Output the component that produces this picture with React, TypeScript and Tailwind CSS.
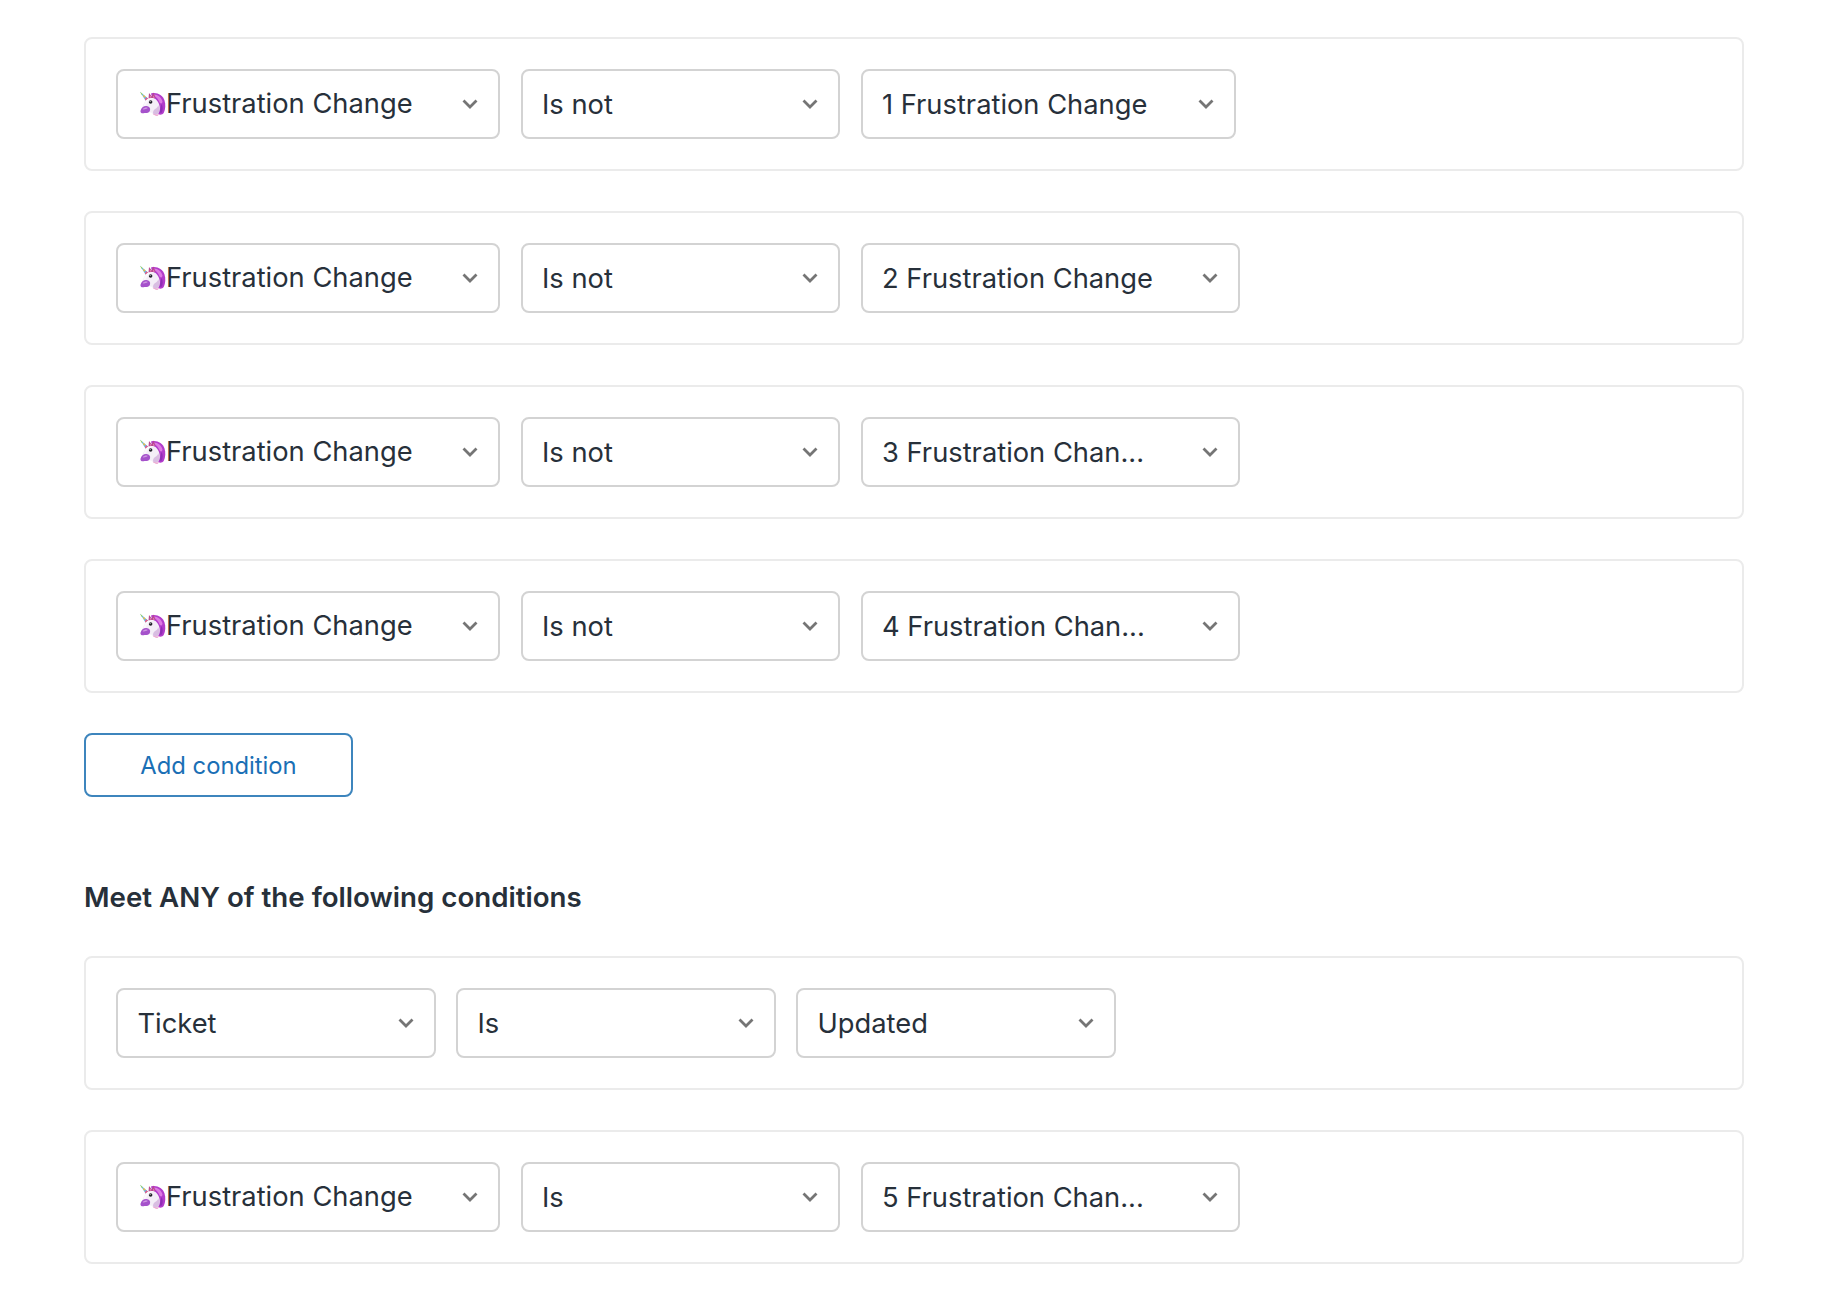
const font = "[font-family:Inter,'Liberation_Sans',sans-serif]"

function Unicorn() {
  return (
    <svg viewBox="0 0 26 25" className="-mt-[3px] h-[25px] w-[26px] shrink-0" aria-hidden="true">
      {/* mane */}
      <path d="M11 2.500c6-1.500 11.500 1.500 13.500 7 1.300 4 1 8.500-.8 12.500-1.200 1.800-3.700 2-5.200 1.200L12 6z" fill="#b23ccb" />
      <path d="M14 3.500c4 .2 7.500 3 8.500 7-.2 2-1.500 2.500-2.800 1.200C18.500 8.500 16.500 6 14 5z" fill="#dd7be3" />
      <path d="M21.500 13c1.500 2.500 1.500 6 .3 8.500-1 .5-1.800.2-2.300-.3z" fill="#8f2fb5" />
      {/* ears */}
      <path d="M8.500 7.500L9 2l2.800 3.500L13.500 1.500l2 5-3.500 2z" fill="#b8478f" />
      <path d="M9.800 6.500l.2-2 1.500 2zM13 6.500l.6-2 1 2.300z" fill="#ee8fbe" />
      {/* horn */}
      <path d="M0 .8l8 6.800-2.300 2.200z" fill="#62b7e6" />
      <path d="M0 .8l2.600 2.200-.8.9z" fill="#9bd04c" />
      <path d="M3.500 3.800l2 1.700-1.300 1.300-1.100-1.900z" fill="#f2be3a" />
      <path d="M6.300 6.200l1.700 1.400-2.300 2.200-.8-1.500z" fill="#e65a88" />
      {/* head */}
      <path d="M5 10.500C7.500 6.800 13.500 5.800 16.500 9c3.500 3.700 4 9 2.500 12.500-1 2-3.500 2.500-5.500 1.500-1.500-1-2-1.800-4-1.800-2.500.2-5 .8-7.500-.2C.500 19.500 3 13.500 5 10.500z" fill="#f4eef7" />
      <path d="M5 10.500C7 7.600 11 6.500 14 7.500c-3 .5-5.500 2-7 4.500-1 1.700-2 3-2.500 4L3 16.500z" fill="#fbf9fc" />
      <path d="M15 18c1.500-.5 2.800-2 3.300-3.700 1.200 2.500 1.200 5.500.7 7.200-1 2-3.500 2.500-5.500 1.500-1-1-.5-3.500 1.500-5z" fill="#d9bde2" />
      {/* muzzle */}
      <path d="M.5 19.800c.8-3 3.300-5 6-4.700 2.800.3 4.200 2.300 3.500 4.400-.6 1.900-2.300 2.500-4.500 2.600-2 .2-3.900.2-4.700-.7-.4-.5-.4-1-.3-1.600z" fill="#a552cb" />
      <path d="M3 17.800c1-1.100 2.500-1.700 4-1.300.9.300.6 1.100-.3 1.300-1.300.2-2.500.6-3.400.7-.5 0-.6-.4-.3-.7z" fill="#cf97e1" />
      {/* eye */}
      <circle cx="10.600" cy="11" r="1.800" fill="#22222a" />
      <circle cx="10.100" cy="10.500" r=".5" fill="#ffffff" />
      {/* neck */}
      <path d="M12.500 22.600c2 1.200 4.500 1.400 6.200.3l-.6 1.500c-1.700.6-4 .3-5.600-1.800z" fill="#e793c6" />
    </svg>
  )
}

function Chevron() {
  return (
    <svg viewBox="0 0 16 10" className="h-[10px] w-[16px] shrink-0" fill="none" stroke="#757575" strokeWidth="2.8" aria-hidden="true">
      <path d="M1.500 1.500L8 8l6.500-6.500" />
    </svg>
  )
}

type SelectProps = { label: string; width: string; emoji?: boolean }

function Select({ label, width, emoji }: SelectProps) {
  return (
    <div className={`flex h-[70px] shrink-0 items-center justify-between rounded-lg border-2 border-[#d3d3d3] bg-white pr-[20px] ${emoji ? 'pl-[22px]' : 'pl-[19.500px]'} ${width}`}>
      <span className="flex items-center pt-[2px] text-[27.300px] leading-none text-[#27303a]">
        {emoji && <Unicorn />}
        <span className={emoji ? '-mt-[2px]' : ''}>{label}</span>
      </span>
      <Chevron />
    </div>
  )
}

function ConditionCard({ field, op, value, wide }: { field?: string; op: string; value: string; wide?: boolean }) {
  return (
    <div className="flex gap-[20.500px] rounded-lg border-2 border-[#ebebeb] bg-white p-[30px]">
      {field ? <Select label={field} width="w-[319.500px]" /> : <Select label="Frustration Change" width="w-[384px]" emoji />}
      <Select label={op} width="w-[319.500px]" />
      <Select label={value} width={field ? 'w-[319.500px]' : wide ? 'w-[379px]' : 'w-[375px]'} />
    </div>
  )
}

export default function App() {
  return (
    <div className={`min-h-[1290px] bg-white pt-[37px] pr-[92px] pl-[84px] ${font}`}>
      <div className="flex flex-col gap-[40px]">
        <ConditionCard op="Is not" value="1 Frustration Change" />
        <ConditionCard op="Is not" value="2 Frustration Change" wide />
        <ConditionCard op="Is not" value="3 Frustration Chan..." wide />
        <ConditionCard op="Is not" value="4 Frustration Chan..." wide />
      </div>
      <button className="mt-[40px] flex h-[64px] w-[269px] items-center justify-center rounded-lg border-2 border-[#3d85bd] bg-white pt-[1px] text-[23.800px] text-[#1a6fb5]">
        Add condition
      </button>
      <h2 className="mt-[83px] text-[27.700px] leading-[34px] font-semibold text-[#27303a]">Meet ANY of the following conditions</h2>
      <div className="mt-[42px] flex flex-col gap-[40px]">
        <ConditionCard field="Ticket" op="Is" value="Updated" />
        <ConditionCard op="Is" value="5 Frustration Chan..." wide />
      </div>
    </div>
  )
}
